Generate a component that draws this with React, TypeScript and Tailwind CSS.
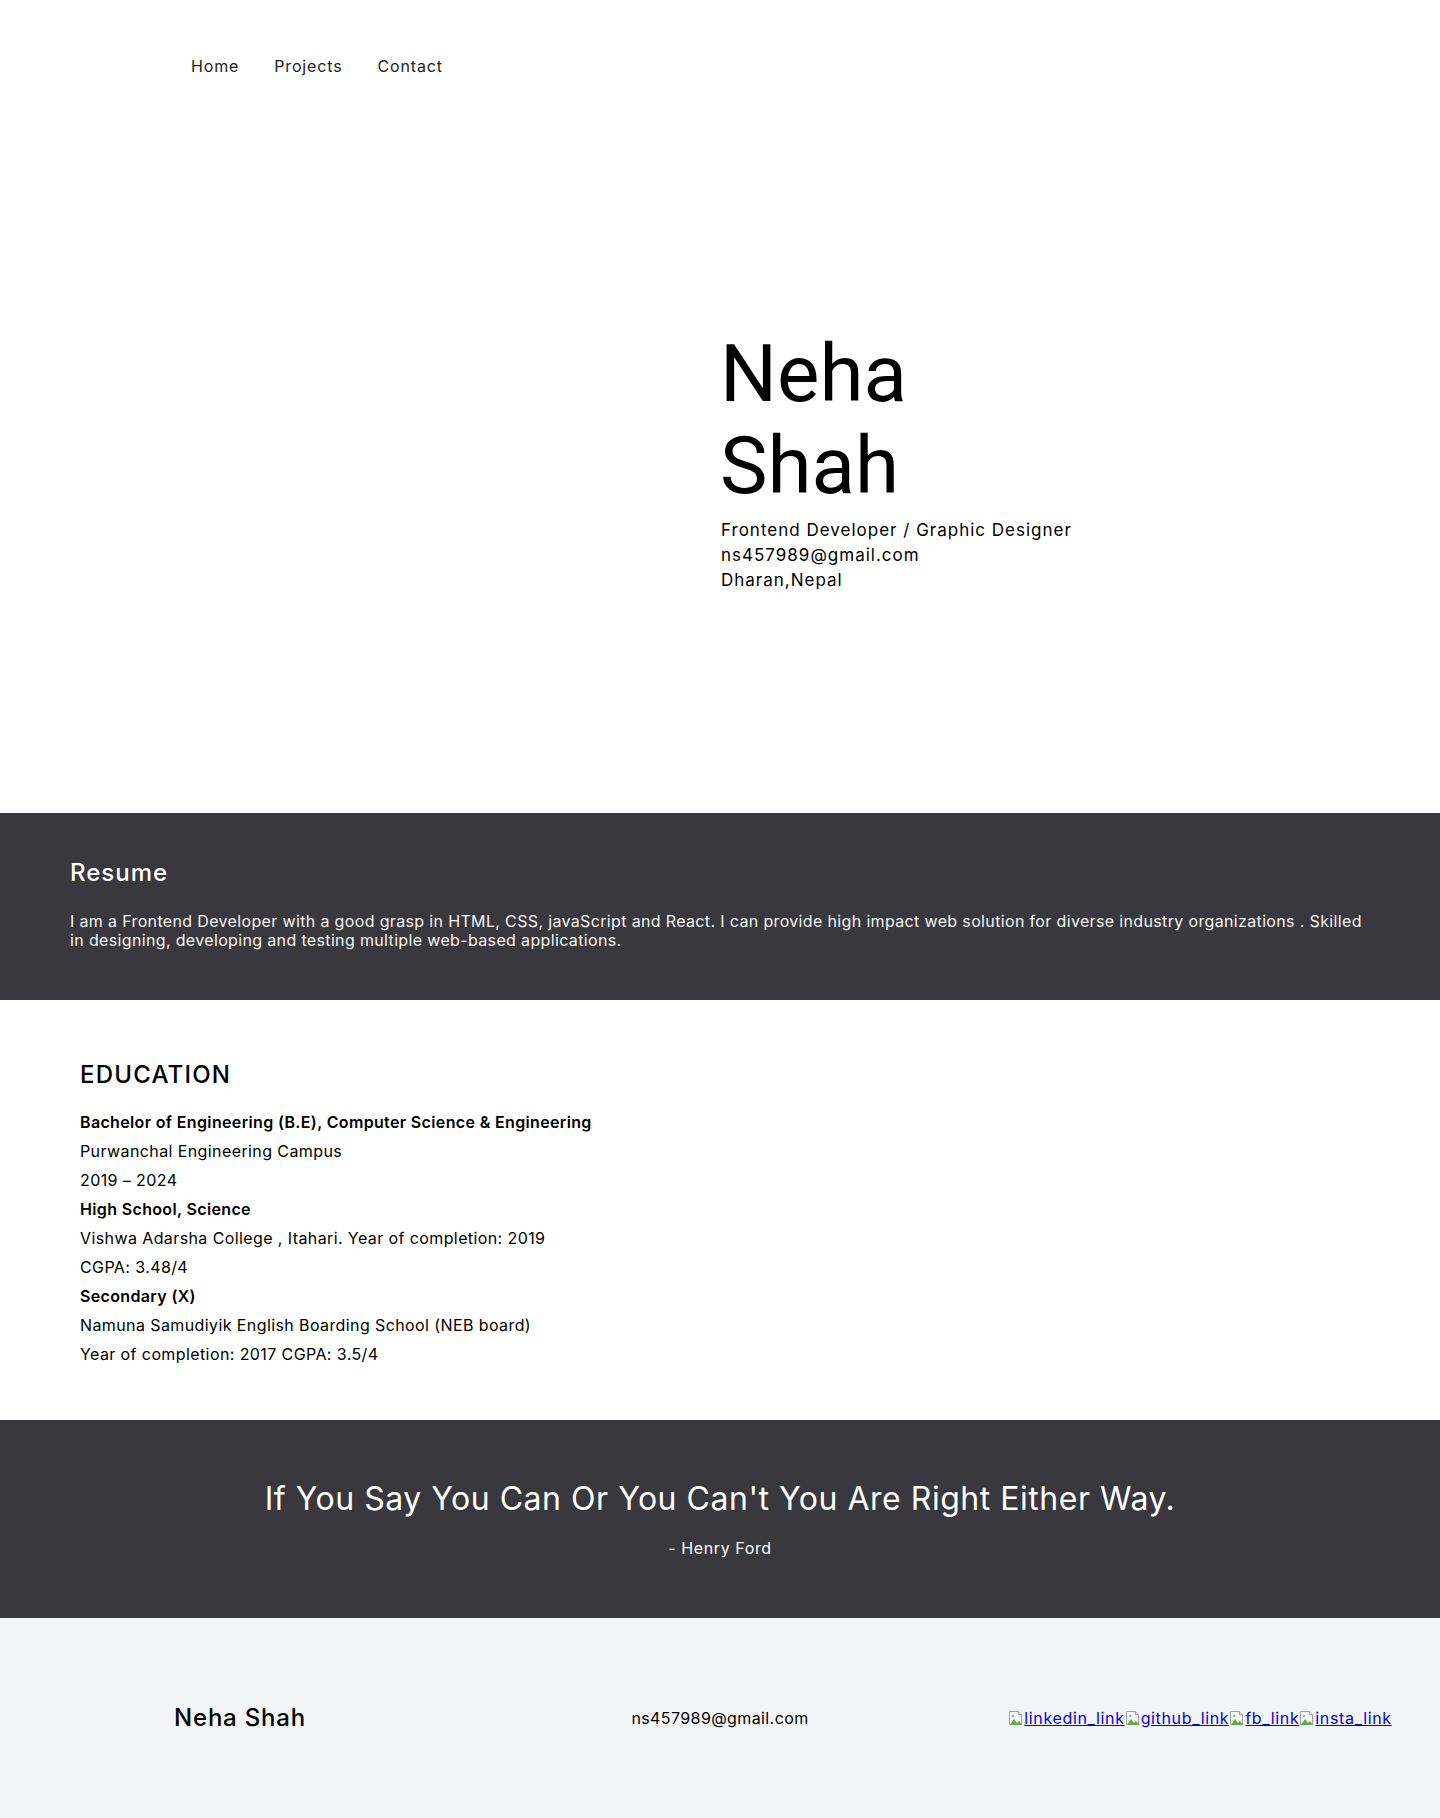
import React from "react";

const sans = "font-['Inter','Noto_Sans',sans-serif]";

function BrokenImg() {
  return (
    <svg width="16" height="16" viewBox="0 0 16 16" className="inline-block align-[-2px]">
      <path d="M1.5 1.5h9l3 3v10h-12z" fill="#f8f8f8" stroke="#9aa0a6" />
      <path d="M10.5 1.5v3h3" fill="#e8e8e8" stroke="#9aa0a6" />
      <path d="M2 15l4-6 3 4 2-2 3 4z" fill="#5db035" />
      <circle cx="5" cy="6" r="1.3" fill="#7fb0e0" />
    </svg>
  );
}

function SocialLink({ label }: { label: string }) {
  return (
    <a href="#" className="text-[#0000ee] underline whitespace-nowrap">
      <BrokenImg />
      {label}
    </a>
  );
}

export default function App() {
  const edu: { t: string; b?: boolean }[] = [
    { t: "Bachelor of Engineering (B.E), Computer Science & Engineering", b: true },
    { t: "Purwanchal Engineering Campus" },
    { t: "2019 – 2024" },
    { t: "High School, Science", b: true },
    { t: "Vishwa Adarsha College , Itahari. Year of completion: 2019" },
    { t: "CGPA: 3.48/4" },
    { t: "Secondary (X)", b: true },
    { t: "Namuna Samudiyik English Boarding School (NEB board)" },
    { t: "Year of completion: 2017 CGPA: 3.5/4" },
  ];

  return (
    <div className={`${sans} bg-white text-black w-full`}>
      {/* Nav */}
      <nav className="h-[113px] pt-[54px] pl-[191px]">
        <ul className="flex gap-[35px] text-[16px] leading-[24px] text-[#222] tracking-[0.85px]">
          <li>Home</li>
          <li>Projects</li>
          <li>Contact</li>
        </ul>
      </nav>

      {/* Hero */}
      <section className="h-[700px] grid grid-cols-2 items-center">
        <div />
        <div className="pb-[6px]">
          <h1 className="font-['Roboto',sans-serif] text-[80px] leading-[92px] font-normal">
            Neha
            <br />
            Shah
          </h1>
          <div className="mt-[6px] text-[17px] leading-[25px] tracking-[1px] pl-[1px]">
            <p>Frontend Developer / Graphic Designer</p>
            <p>ns457989@gmail.com</p>
            <p>Dharan,Nepal</p>
          </div>
        </div>
      </section>

      {/* Resume */}
      <section className="bg-[#39383e] text-white px-[70px] pt-[44px] pb-[50px]">
        <h2 className="text-[24px] leading-[32px] font-medium tracking-[1px]">Resume</h2>
        <p className="mt-[23px] text-[16px] leading-[19px] tracking-[0.35px] text-[#f4f4f4]">
          I am a Frontend Developer with a good grasp in HTML, CSS, javaScript and React. I can provide high impact web solution for diverse industry organizations . Skilled in designing, developing and testing multiple web-based applications.
        </p>
      </section>

      {/* Education */}
      <section className="px-[80px] pt-[59px] pb-[51px]">
        <h2 className="text-[24px] leading-[32px] font-medium tracking-[1.2px]">EDUCATION</h2>
        <div className="mt-[17px] text-[16px] leading-[29px]">
          {edu.map((e, i) => (
            <p
              key={i}
              className={e.b ? "font-semibold tracking-[0.35px]" : "font-normal tracking-[0.4px]"}
            >
              {e.t}
            </p>
          ))}
        </div>
      </section>

      {/* Quote */}
      <section className="bg-[#39383e] text-white text-center pt-[59px] pb-[58px]">
        <h2 className="text-[32px] leading-[40px] font-normal tracking-[0.52px]">
          If You Say You Can Or You Can't You Are Right Either Way.
        </h2>
        <p className="mt-[17px] text-[16px] leading-[24px] tracking-[0.6px]">- Henry Ford</p>
      </section>

      {/* Footer */}
      <footer className="bg-[#f3f4f6] h-[200px] grid grid-cols-3 items-center">
        <div className="text-center text-[24px] leading-[32px] font-medium tracking-[0.8px]">Neha Shah</div>
        <div className="text-center text-[16px] leading-[24px] tracking-[0.4px]">ns457989@gmail.com</div>
        <div className="flex justify-center text-[16px] leading-[24px] tracking-[0.65px]">
          <SocialLink label="linkedin_link" />
          <SocialLink label="github_link" />
          <SocialLink label="fb_link" />
          <SocialLink label="insta_link" />
        </div>
      </footer>
    </div>
  );
}
